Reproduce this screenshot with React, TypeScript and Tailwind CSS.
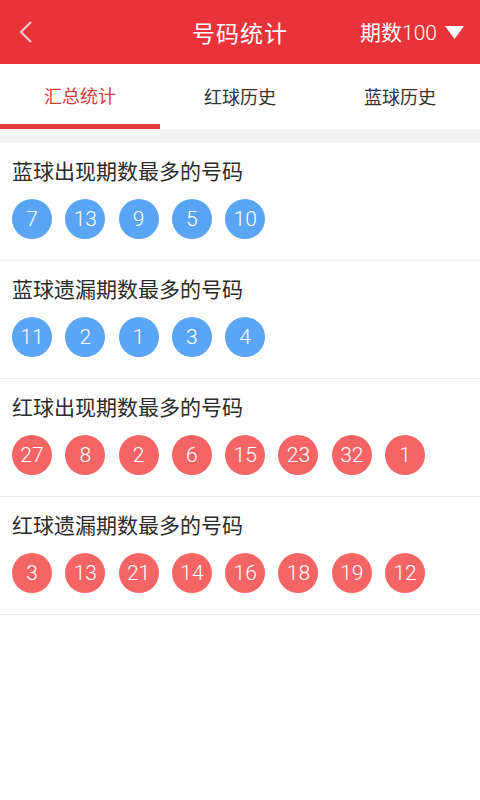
import React from "react";

const font = { fontFamily: '"Noto Sans CJK SC", "Noto Sans", sans-serif' };
const numFont = { fontFamily: 'Roboto, "Noto Sans CJK SC", sans-serif' };

const sections = [
  { title: "蓝球出现期数最多的号码", color: "blue", nums: [7, 13, 9, 5, 10] },
  { title: "蓝球遗漏期数最多的号码", color: "blue", nums: [11, 2, 1, 3, 4] },
  { title: "红球出现期数最多的号码", color: "red", nums: [27, 8, 2, 6, 15, 23, 32, 1] },
  { title: "红球遗漏期数最多的号码", color: "red", nums: [3, 13, 21, 14, 16, 18, 19, 12] },
];

export default function App() {
  return (
    <div className="w-[480px] h-[800px] bg-white flex flex-col" style={font}>
      <div className="h-[64px] bg-[#e8333a] flex items-center relative shrink-0">
        <svg className="absolute left-[18px] top-[20px]" width="16" height="24" viewBox="0 0 16 24">
          <path d="M13 2 L3 12 L13 22" fill="none" stroke="#f6c9cb" strokeWidth="2.2" />
        </svg>
        <div className="flex-1 text-center text-white text-[23px] leading-none tracking-[1px]">号码统计</div>
        <div className="absolute right-[16px] top-0 h-full flex items-center gap-[8px] text-white">
          <span className="text-[21px] leading-none">
            期数<span className="font-light" style={numFont}>100</span>
          </span>
          <svg width="19" height="13" viewBox="0 0 19 13">
            <path d="M0 0 L19 0 L9.5 13 Z" fill="#fff" />
          </svg>
        </div>
      </div>
      <div className="h-[65px] flex shrink-0 bg-white">
        <div className="w-1/3 flex flex-col">
          <div className="flex-1 flex items-center justify-center text-[18px] text-[#d43a40] pt-[2px]">汇总统计</div>
          <div className="h-[5px] bg-[#e0383d]" />
        </div>
        <div className="w-1/3 flex items-center justify-center text-[18px] text-[#333]">红球历史</div>
        <div className="w-1/3 flex items-center justify-center text-[18px] text-[#333]">蓝球历史</div>
      </div>
      <div className="h-[14px] bg-[#f4f4f4] shrink-0" />
      {sections.map((s) => (
        <div key={s.title} className="h-[118px] border-b border-[#eeeeee] pl-[12px] pt-[12px] shrink-0">
          <div className="text-[21px] leading-[30px] text-[#2b2b2b]">{s.title}</div>
          <div className="flex gap-[13.3px] mt-[14px]">
            {s.nums.map((n, i) => (
              <div
                key={i}
                className={
                  "w-[40px] h-[40px] rounded-full flex items-center justify-center text-white text-[21px] font-light leading-none " +
                  (s.color === "blue" ? "bg-[#5aa5f5]" : "bg-[#f56566]")
                }
                style={numFont}
              >
                {n}
              </div>
            ))}
          </div>
        </div>
      ))}
    </div>
  );
}
